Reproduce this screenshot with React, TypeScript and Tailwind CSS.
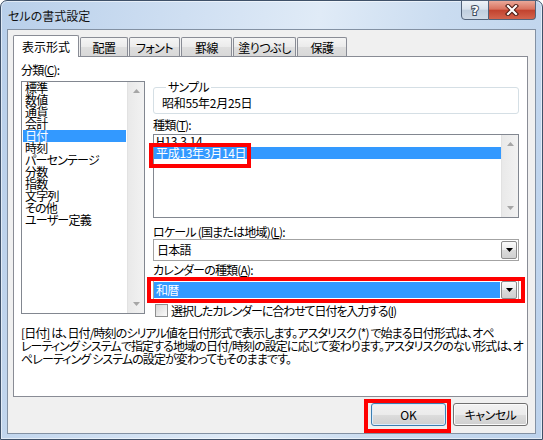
import React from "react";

const categories = [
  "標準",
  "数値",
  "通貨",
  "会計",
  "日付",
  "時刻",
  "パーセンテージ",
  "分数",
  "指数",
  "文字列",
  "その他",
  "ユーザー定義",
];

function Arrow({ up, color }: { up?: boolean; color: string }) {
  return (
    <svg width="7" height="4" viewBox="0 0 7 4" className="block">
      <polygon points={up ? "0,4 3.5,0 7,4" : "0,0 7,0 3.5,4"} fill={color} />
    </svg>
  );
}

function Scrollbar() {
  return (
    <div className="flex w-[17px] shrink-0 flex-col items-center justify-between border-l border-[#e2e2e2] bg-[linear-gradient(to_right,#e9e9e9,#f2f2f2)] py-[7px]">
      <Arrow up color="#a6a6a6" />
      <Arrow color="#a6a6a6" />
    </div>
  );
}

function DropButton() {
  return (
    <div className="my-[1px] mr-[1px] flex w-[16px] items-center justify-center rounded-[2px] border border-[#8b8b8b] bg-[linear-gradient(#fbfbfb,#ececec_48%,#dadada_52%,#d0d0d0)]">
      <Arrow color="#000000" />
    </div>
  );
}

function CaptionButtons() {
  return (
    <div className="-mt-[1px] mr-[6px] flex h-[20px]">
      <div className="flex w-[28px] items-center justify-center rounded-bl-[4px] border border-[#52637a] bg-[linear-gradient(#eef3f8,#d9e3ee_45%,#c0cfdf_52%,#cfdbe8)]">
        <svg width="12" height="14" viewBox="0 0 12 14">
          <text
            x="6"
            y="12"
            textAnchor="middle"
            fontSize="13"
            fontWeight="bold"
            fontFamily="'DejaVu Sans', sans-serif"
            fill="#ffffff"
            stroke="#3c4a5c"
            strokeWidth="2"
            paintOrder="stroke"
          >
            ?
          </text>
        </svg>
      </div>
      <div className="flex w-[47px] items-center justify-center rounded-br-[4px] border border-l-0 border-[#52637a] bg-[linear-gradient(#eaa899,#d9735f_45%,#c2432f_52%,#d3644d)]">
        <svg width="14" height="12" viewBox="0 0 14 12">
          <path d="M3 2 L11 10 M11 2 L3 10" stroke="#4a1a12" strokeWidth="4.2" strokeLinecap="square" />
          <path d="M3 2 L11 10 M11 2 L3 10" stroke="#ffffff" strokeWidth="2.2" strokeLinecap="square" />
        </svg>
      </div>
    </div>
  );
}

function Tab({ label, width }: { label: string; width: string }) {
  return (
    <div
      className={`ml-[1px] flex h-[19px] items-center justify-center rounded-t-[2px] border border-b-0 border-[#898c95] bg-[linear-gradient(#f5f5f5,#ebebeb_50%,#dedede_51%,#d8d8d8)] pt-[1px] tracking-[-0.5px] ${width}`}
    >
      {label}
    </div>
  );
}

export default function App() {
  return (
    <div className="h-[440px] w-[543px] font-['Noto_Sans_CJK_JP','Noto_Sans',sans-serif] text-[12px] leading-[12px] text-black [font-feature-settings:'palt']">
      <div className="flex h-[440px] w-[543px] flex-col rounded-t-[7px] border border-[#3f5169] bg-[linear-gradient(100deg,#b8cfea_0%,#cfdff2_30%,#e0ebf7_52%,#cadcf0_72%,#bcd2ec_100%)] shadow-[inset_0_0_0_1px_rgba(255,255,255,0.55)]">
        {/* title bar */}
        <div className="flex h-[28px] items-start justify-between">
          <div className="pl-[7px] pt-[9px] text-[#111]">セルの書式設定</div>
          <CaptionButtons />
        </div>

        {/* client area */}
        <div className="mx-[6px] flex h-[405px] flex-col border border-[#8391a3] bg-[#f0f0f0] pl-[5px] pr-[7px] pt-[5px]">
          {/* tabs */}
          <div className="flex h-[21px] items-end">
            <div className="relative z-10 -mb-[1px] flex h-[22px] w-[66px] items-center justify-center rounded-t-[2px] border border-b-0 border-[#898c95] bg-white">
              表示形式
            </div>
            <Tab label="配置" width="w-[48px]" />
            <Tab label="フォント" width="w-[51px]" />
            <Tab label="罫線" width="w-[51px]" />
            <Tab label="塗りつぶし" width="w-[63px]" />
            <Tab label="保護" width="w-[50px]" />
          </div>

          {/* tab page */}
          <div className="flex h-[341px] flex-col border border-[#898c95] bg-white pl-[7px] tracking-[-0.8px]">
            <div className="flex items-start">
              {/* category list */}
              <div className="mt-[7px] w-[124px]">
                <div className="h-[12px]">
                  分類(<span className="underline">C</span>):
                </div>
                <div className="mt-[5px] flex h-[233px] border border-[#828790] bg-white">
                  <ul className="flex-1 pl-[1px] pr-[1px]">
                    {categories.map((c) => (
                      <li
                        key={c}
                        className={
                          c === "日付"
                            ? "h-[12px] bg-[#3399ff] pl-[2px] text-white"
                            : "h-[12px] pl-[2px]"
                        }
                      >
                        {c}
                      </li>
                    ))}
                  </ul>
                  <Scrollbar />
                </div>
              </div>

              {/* right column */}
              <div className="ml-[8px] mt-[24px] w-[366px]">
                <fieldset className="rounded-[3px] border border-[#d5dfe5] pb-[4px] pl-[8px] pt-[4px]">
                  <legend className="ml-[4px] px-[2px] leading-[12px]">サンプル</legend>
                  <div className="h-[12px] tracking-[-0.3px]">昭和55年2月25日</div>
                </fieldset>

                <div className="mt-[5px] h-[12px]">
                  種類(<span className="underline">T</span>):
                </div>
                <div className="relative mt-[3px] flex h-[84px] border border-[#828790] bg-white">
                  <ul className="flex-1 tracking-[-0.3px]">
                    <li className="h-[12px] pl-[2px]">H13.3.14</li>
                    <li className="h-[12px] bg-[#3399ff] pl-[2px] text-white">平成13年3月14日</li>
                  </ul>
                  <Scrollbar />
                  <div className="absolute left-[-5px] top-[8px] h-[25px] w-[102px] border-4 border-[#ff0000]" />
                </div>

                <div className="mt-[8px] h-[12px]">
                  ロケール (国または地域)(<span className="underline">L</span>):
                </div>
                <div className="mt-[1px] flex h-[22px] border border-[#a3a3a3] bg-white">
                  <div className="flex flex-1 items-center pl-[3px]">日本語</div>
                  <DropButton />
                </div>

                <div className="mt-[3px] h-[12px]">
                  カレンダーの種類(<span className="underline">A</span>):
                </div>
                <div className="relative mt-[3px] flex h-[22px] border border-[#a3a3a3] bg-white">
                  <div className="my-[2px] mr-[1px] flex flex-1 items-center bg-[#3399ff] pl-[2px] text-white">
                    和暦
                  </div>
                  <DropButton />
                  <div className="absolute left-[-7px] top-[-3px] h-[26px] w-[378px] border-4 border-[#ff0000]" />
                </div>

                <div className="mt-[3px] flex h-[13px] items-center">
                  <span className="ml-[2px] h-[13px] w-[13px] shrink-0 border border-[#8e8f8f] bg-[linear-gradient(135deg,#d6d6d6,#fbfbfb)]" />
                  <span className="ml-[3px] tracking-[-1.1px]">
                    選択したカレンダーに合わせて日付を入力する(<span className="underline">I</span>)
                  </span>
                </div>
              </div>
            </div>

            {/* description */}
            <div className="mt-[9px] whitespace-nowrap leading-[13px] tracking-[-0.9px]">
              <div>[日付] は、日付/時刻のシリアル値を日付形式で表示します。アスタリスク (*) で始まる日付形式は、オペ</div>
              <div>レーティング システムで指定する地域の日付/時刻の設定に応じて変わります。アスタリスクのない形式は、オ</div>
              <div>ペレーティング システムの設定が変わってもそのままです。</div>
            </div>
          </div>

          {/* dialog buttons */}
          <div className="mt-[6px] flex justify-end gap-[7px]">
            <div className="relative">
              <button className="flex h-[23px] w-[75px] items-center justify-center rounded-[3px] border border-[#3c7fb1] bg-[linear-gradient(#f2f2f2,#ebebeb_50%,#dddddd_51%,#cfcfcf)] shadow-[inset_0_0_0_1px_#dcecfc]">
                OK
              </button>
              <div className="absolute left-[-7px] top-[-4px] h-[34px] w-[87px] border-4 border-[#ff0000]" />
            </div>
            <button className="flex h-[23px] w-[75px] items-center justify-center rounded-[3px] border border-[#707070] bg-[linear-gradient(#f2f2f2,#ebebeb_50%,#dddddd_51%,#cfcfcf)] shadow-[inset_0_0_0_1px_#fbfbfb] tracking-[-0.5px]">
              キャンセル
            </button>
          </div>
        </div>
      </div>
    </div>
  );
}
